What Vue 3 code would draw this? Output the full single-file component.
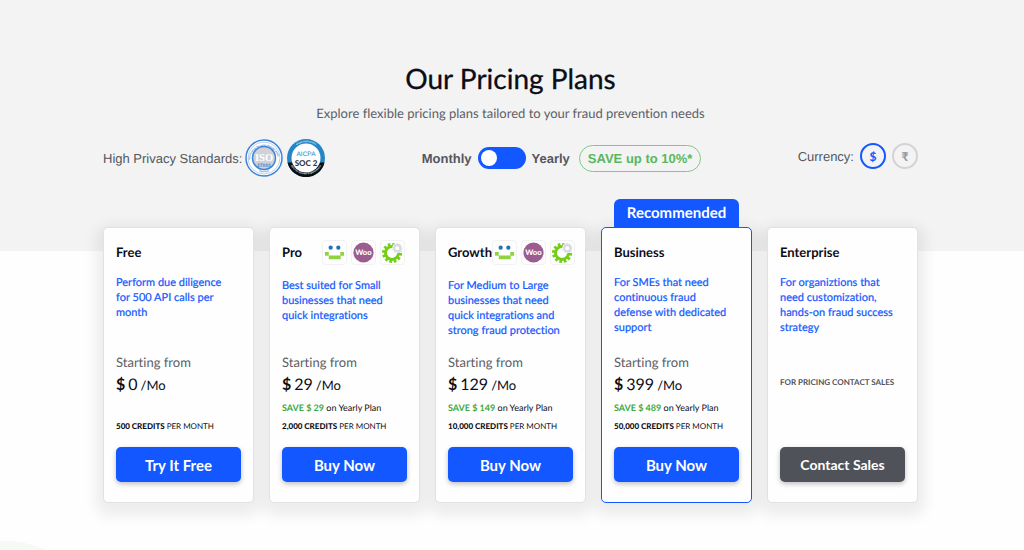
<template>
  <main class="pricing-page">
    <div class="container">
      <header class="page-header">
        <h1>Our Pricing Plans</h1>
        <p>Explore flexible pricing plans tailored to your fraud prevention needs</p>
      </header>

      <section class="options-bar">
        <div class="privacy">
          <span>High Privacy Standards:</span>
          <div class="badges">
            <svg viewBox="0 0 76 76" role="img" aria-label="ISO 27001">
              <defs>
                <path id="iso-top" d="M10 42a28 28 0 1 1 56 0" />
                <path id="iso-bottom" d="M18 59a30 30 0 0 0 40 0" />
              </defs>
              <circle cx="38" cy="38" r="36" fill="#fff" stroke="#3f84d6" stroke-width="3" />
              <circle cx="38" cy="38" r="32" fill="none" stroke="#72a5df" stroke-width="1" />
              <circle cx="38" cy="38" r="23" fill="#cfd3d8" stroke="#3f84d6" stroke-width="3" />
              <text class="ring-text blue"><textPath href="#iso-top">Information Security Management</textPath></text>
              <text class="ring-text blue"><textPath href="#iso-bottom" startOffset="50%" text-anchor="middle">Certified</textPath></text>
              <text x="38" y="43" class="iso-name">ISO</text>
              <text x="38" y="55" class="iso-number">27001</text>
            </svg>
            <svg viewBox="0 0 76 76" role="img" aria-label="AICPA SOC 2">
              <defs>
                <path id="soc-top" d="M6 38a32 32 0 0 1 64 0" />
                <path id="soc-bottom" d="M4 44a35 35 0 0 0 68 0" />
              </defs>
              <circle cx="38" cy="38" r="38" fill="#2586c6" />
              <path d="M1 47A38 38 0 0 0 75 47z" fill="#0b0c10" />
              <circle cx="38" cy="38" r="29" fill="#fff" />
              <text class="ring-text light"><textPath href="#soc-top" startOffset="50%" text-anchor="middle">aicpa.org/soc4so</textPath></text>
              <text class="ring-text light"><textPath href="#soc-bottom" startOffset="50%" text-anchor="middle">SOC for Service Organizations</textPath></text>
              <text x="38" y="34" class="soc-name">AICPA</text>
              <text x="38" y="53" class="soc-number">SOC 2</text>
            </svg>
          </div>
        </div>

        <div class="billing">
          <label for="billing">Monthly</label>
          <input id="billing" v-model="yearly" class="switch" type="checkbox" role="switch" aria-label="Yearly billing" />
          <label for="billing">Yearly</label>
          <span class="save-pill">SAVE up to 10%*</span>
        </div>

        <div class="currency">
          <span>Currency:</span>
          <label v-for="c in currencies" :key="c.code" class="coin" :class="{ active: currency === c.code }">
            <input v-model="currency" type="radio" name="currency" :value="c.code" :aria-label="c.code" />
            {{ c.symbol }}
          </label>
        </div>
      </section>

      <section class="plans">
        <article v-for="plan in plans" :key="plan.name" class="plan" :class="{ recommended: plan.recommended }">
          <div v-if="plan.recommended" class="ribbon">Recommended</div>

          <div class="plan-head">
            <h2>{{ plan.name }}</h2>
            <div v-if="plan.integrations" class="integrations">
              <span class="tile">
                <svg viewBox="0 0 24 24" aria-hidden="true">
                  <circle cx="8" cy="7" r="2.2" fill="#1b75bb" />
                  <circle cx="16" cy="7" r="2.2" fill="#1b75bb" />
                  <path d="M2 11.5h4v3.500h12v-3.500h4v4h-3.500v3.500H6v-3.500H2z" fill="#8fd43f" />
                </svg>
              </span>
              <span class="tile">
                <svg viewBox="0 0 24 24" aria-hidden="true">
                  <circle cx="12" cy="12" r="10.500" fill="#9b5c8f" />
                  <text x="12" y="15" class="woo">Woo</text>
                </svg>
              </span>
              <span class="tile">
                <svg viewBox="0 0 24 24" aria-hidden="true">
                  <circle cx="11.500" cy="12.500" r="9" fill="none" stroke="#72cf12" stroke-width="3" stroke-dasharray="2.700 2.012" />
                  <circle cx="11.500" cy="12.500" r="6.800" fill="none" stroke="#72cf12" stroke-width="3" />
                  <circle cx="17" cy="7.500" r="5.300" fill="#fff" />
                  <circle cx="17" cy="7.500" r="4.600" fill="none" stroke="#d9dcdf" stroke-width="1.400" stroke-dasharray="1.600 1.290" />
                  <circle cx="17" cy="7.500" r="3.200" fill="none" stroke="#d9dcdf" stroke-width="2.200" />
                </svg>
              </span>
            </div>
          </div>

          <p class="desc">{{ plan.desc }}</p>

          <div class="pricing">
            <template v-if="plan.price">
              <p class="starting">Starting from</p>
              <p class="price"><b>$</b><span>{{ plan.price }}</span><small>/Mo</small></p>
              <p class="saving">
                <template v-if="plan.save"><em>SAVE $ {{ plan.save }}</em> on Yearly Plan</template>
              </p>
              <p class="credits"><b>{{ plan.credits }} CREDITS</b> PER MONTH</p>
            </template>
            <p v-else class="contact-note">FOR PRICING CONTACT SALES</p>
          </div>

          <button type="button" class="cta" :class="{ dark: !plan.price }">{{ plan.cta }}</button>
        </article>
      </section>
    </div>
    <div class="blob"></div>
  </main>
</template>

<script setup>
import { ref } from 'vue';

const yearly = ref(false);
const currency = ref('USD');

const currencies = [
  { code: 'USD', symbol: '$' },
  { code: 'INR', symbol: '₹' }
];

const plans = [
  { name: 'Free', desc: 'Perform due diligence for 500 API calls per month', price: '0', credits: '500', cta: 'Try It Free' },
  { name: 'Pro', desc: 'Best suited for Small businesses that need quick integrations', price: '29', save: '29', credits: '2,000', cta: 'Buy Now', integrations: true },
  { name: 'Growth', desc: 'For Medium to Large businesses that need quick integrations and strong fraud protection', price: '129', save: '149', credits: '10,000', cta: 'Buy Now', integrations: true },
  { name: 'Business', desc: 'For SMEs that need continuous fraud defense with dedicated support', price: '399', save: '489', credits: '50,000', cta: 'Buy Now', recommended: true },
  { name: 'Enterprise', desc: 'For organiztions that need customization, hands-on fraud success strategy', cta: 'Contact Sales' }
];
</script>

<style>
body { margin: 0; background: #fefefe; }
</style>

<style scoped>
* { box-sizing: border-box; }
h1, h2, p { margin: 0; }

.pricing-page {
  position: relative; overflow: hidden; min-height: 100vh; padding: 59px 106px 47px 103px;
  background: linear-gradient(#f3f3f3 251px, #fefefe 251px);
  font-family: Lato, sans-serif; color: #0b0d17;
  text-rendering: geometricPrecision; font-variant-ligatures: none;
}
.container { max-width: 1200px; margin: 0 auto; }

.page-header { text-align: center; }
.page-header h1 { font-size: 28px; line-height: 38px; font-weight: 400; -webkit-text-stroke: 0.3px; }
.page-header p { margin-top: 7px; font-size: 13px; line-height: 18px; color: #5c5f66; }

/* Options */
.options-bar {
  display: flex; justify-content: space-between; align-items: center; height: 38px; margin-top: 17px;
  font-family: "Liberation Sans", Arial, sans-serif; font-size: 13px; color: #54575e;
}
.privacy, .billing, .currency { display: flex; align-items: center; gap: 6px; }
.privacy { gap: 3px; }
.badges { display: flex; gap: 4px; }
.badges svg { width: 38px; height: 38px; }
.ring-text { font-size: 5px; font-weight: 700; }
.blue { fill: #3f84d6; }
.light { fill: #d6e8f5; }
.iso-name { font: 700 21px "Liberation Serif", serif; fill: #fff; text-anchor: middle; }
.iso-number { font-size: 10px; font-weight: 700; fill: #3f84d6; text-anchor: middle; }
.soc-name { font-size: 13px; fill: #2586c6; text-anchor: middle; }
.soc-number { font: 900 16px Lato, sans-serif; fill: #33363d; text-anchor: middle; }

.billing { font-weight: 700; }
.switch {
  appearance: none; width: 48px; height: 22px; margin: 0; padding: 3px; border-radius: 11px;
  background: #1257ff; cursor: pointer;
}
.switch::before { content: ''; display: block; width: 16px; height: 16px; border-radius: 50%; background: #fff; }
.switch:checked::before { margin-left: auto; }
.save-pill {
  margin-left: 3px; padding: 0 8px; border: 1px solid #7fca83; border-radius: 14px;
  line-height: 25px; color: #58b85c;
}

.currency { align-self: flex-start; padding-top: 4px; }
.coin {
  display: grid; place-items: center; width: 26px; height: 26px; border: 2px solid #d3d3d3; border-radius: 50%;
  font: 700 12px Lato, "Noto Sans", sans-serif; color: #8f939c; cursor: pointer;
}
.coin.active { border-color: #1257ff; color: #1257ff; }
.coin input { appearance: none; position: absolute; margin: 0; }

/* Plans */
.plans { display: grid; grid-template-columns: repeat(5, 1fr); gap: 15px; margin-top: 50px; isolation: isolate; }
.plan {
  position: relative; display: flex; flex-direction: column; min-width: 0; min-height: 276px; padding: 11px 12px 20px;
  border: 1px solid #e2e2e2; border-radius: 5px; background: #fefefe;
}
.plan::before {
  content: ''; position: absolute; inset: 0; z-index: -1; border-radius: 5px;
  box-shadow: 0 6px 14px 8px rgba(0, 0, 0, 0.07);
}
.plan.recommended { border-color: #1257ff; }
.ribbon {
  position: absolute; left: 12px; right: 12px; bottom: 100%; border-radius: 6px 6px 0 0;
  background: #1257ff; color: #fff; font-size: 15px; line-height: 29px; font-weight: 700; text-align: center;
}

.plan-head { display: flex; align-items: center; justify-content: space-between; height: 26px; padding-right: 2px; }
.plan-head h2 { font-size: 13px; line-height: 18px; font-weight: 700; }
.integrations { display: flex; flex-shrink: 0; gap: 4px; }
.tile { display: grid; place-items: center; width: 25px; height: 25px; border: 1px solid #f2f2f2; border-radius: 4px; }
.tile svg { width: 23px; height: 23px; }
.woo { font: 900 8px Lato, sans-serif; fill: #fff; text-anchor: middle; }

.desc { margin-top: 10px; padding-right: 4px; font-size: 11px; line-height: 15px; color: #1257ff; -webkit-text-stroke: 0.2px; }
.plan-head:has(.integrations) + .desc { margin-top: 13px; }

.pricing { height: 82px; margin-top: auto; }
.starting { font-size: 13px; line-height: 18px; color: #5c5f66; }
.price { display: flex; align-items: baseline; gap: 3px; margin-top: 2px; font-size: 16px; line-height: 24px; }
.price small { font-size: 13px; }
.saving { height: 14px; margin-top: 4px; font-size: 9px; line-height: 14px; }
.saving em { font-style: normal; font-weight: 700; color: #3faa43; }
.credits { margin-top: 4px; font-size: 8px; line-height: 14px; }
.credits b { font-weight: 900; }
.contact-note { margin-top: 22px; font-size: 8px; line-height: 14px; font-weight: 700; color: #50535b; }

.cta {
  height: 35px; margin-top: 12px; padding: 0; border: 0; border-radius: 5px; background: #1257ff; color: #fff;
  font: 700 15px Lato, sans-serif; box-shadow: 0 2px 5px rgba(0, 0, 0, 0.25); cursor: pointer;
}
.cta.dark { background: #50525a; font-size: 14px; }

.blob {
  position: absolute; left: -84px; top: 541px; width: 180px; height: 180px; border-radius: 50%;
  background: #f5faf5;
}
</style>
